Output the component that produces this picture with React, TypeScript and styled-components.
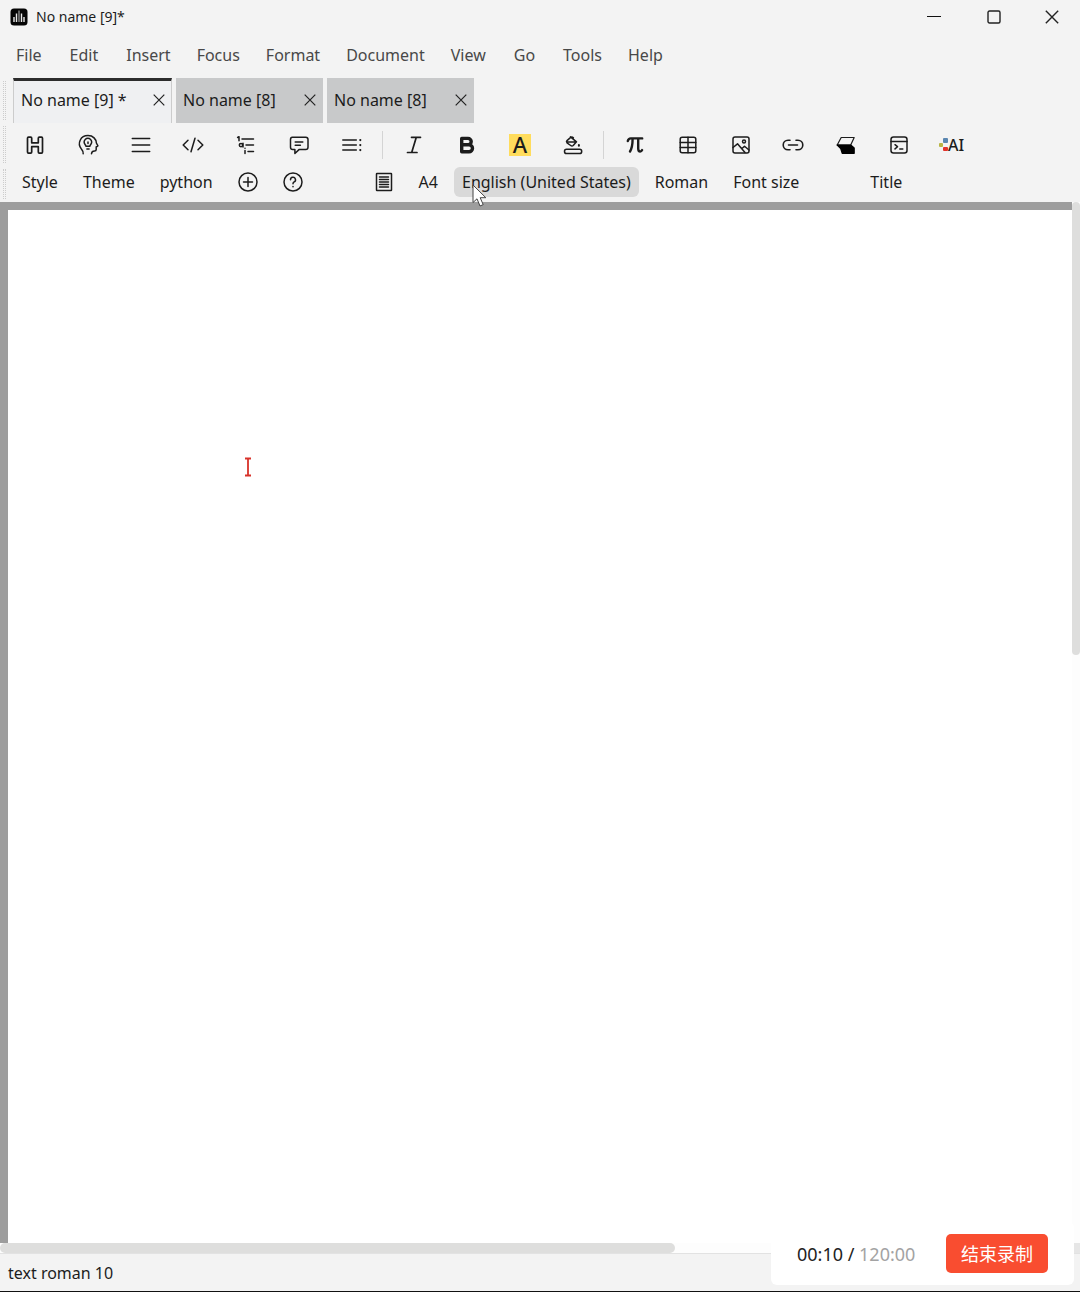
import React from "react";
import styled, { createGlobalStyle, css } from "styled-components";

const GlobalStyle = createGlobalStyle`
  * { box-sizing: border-box; }
  body {
    margin: 0;
    background: #f3f3f3;
    color: #1c1c1c;
    font-family: "Noto Sans", "Noto Sans CJK SC", sans-serif;
    font-size: 16px;
    line-height: 24px;
  }
  button { font: inherit; color: inherit; background: none; border: 0; padding: 0; cursor: default; }
  svg { flex-shrink: 0; }
`;

const Window = styled.div`
  position: relative;
  display: flex;
  flex-direction: column;
  min-height: 100vh;
  border-bottom: 1px solid #111;
`;

const TitleBar = styled.header`
  display: flex;
  align-items: center;
  height: 34px;
  padding-left: 10px;
`;

const WindowTitle = styled.h1`
  flex: 1;
  margin: 0 0 0 8px;
  font-size: 14px;
  font-weight: 400;
`;

const WindowButton = styled.button`
  display: flex;
  align-items: center;
  justify-content: center;
  width: 60px;
  height: 34px;
  &:last-child { width: 56px; }
`;

const MenuBar = styled.nav`
  display: flex;
  height: 44px;
  padding: 0 0 2px 3px;
`;

const MenuItem = styled.button<{ $wide?: boolean }>`
  padding: 0 ${(p) => (p.$wide ? 15 : 13)}px;
  color: #484848;
`;

const Grip = styled.span`
  align-self: stretch;
  width: 3px;
  margin: 3px;
  border: 0 dotted #cccccc;
  border-width: 0 1px;
`;

const TabRow = styled.div`
  display: flex;
  height: 45px;
`;

const TabList = styled.div`
  display: flex;
  gap: 4px;
  padding-left: 4px;
`;

const Tab = styled.div<{ $active?: boolean }>`
  display: flex;
  align-items: center;
  justify-content: space-between;
  min-width: 147px;
  padding: 0 7px 2px;
  background: #c8c9ca;
  ${(p) =>
    p.$active &&
    css`
      min-width: 159px;
      padding: 0 6px 5px 7px;
      background: #eff0f2;
      border: 1px solid #cccccc;
      border-top: 3px solid #2c2c2c;
      border-bottom: 0;
    `}
`;

const CloseTab = styled.button`
  display: flex;
  margin-left: 20px;
`;

const Toolbar = styled.div<{ $height: number }>`
  display: flex;
  align-items: center;
  height: ${(p) => p.$height}px;
`;

const IconGroup = styled.div<{ $count: number; $width: number }>`
  display: grid;
  grid-template-columns: repeat(${(p) => p.$count}, 1fr);
  width: ${(p) => p.$width}px;
`;

const IconButton = styled.button`
  display: flex;
  align-items: center;
  justify-content: center;
  height: 30px;
`;

const Separator = styled.span`
  width: 1px;
  height: 28px;
  margin: 0 5px 0 4px;
  background: #d4d4d4;
`;

const Highlight = styled.span`
  width: 22px;
  height: 22px;
  background: #ffdc5c;
  font-size: 22px;
  line-height: 21px;
  font-weight: 500;
  text-align: center;
`;

const AiLabel = styled.span`
  font-size: 16px;
  font-weight: 500;
`;

const OptionRow = styled.div`
  display: flex;
  gap: 7px;
  padding: 0 0 4px 4px;
`;

const OptionButton = styled.button<{ $hover?: boolean }>`
  position: relative;
  display: flex;
  align-items: center;
  justify-content: center;
  height: 30px;
  padding: 0 ${(p) => (p.$hover ? 8 : 9)}px;
  border-radius: 6px;
  background: ${(p) => (p.$hover ? "#d9d9d9" : "transparent")};
`;

const OptionIcon = styled.button`
  display: flex;
  align-items: center;
  justify-content: center;
  width: 38px;
  height: 30px;
`;

const OptionGap = styled.span`
  width: 39px;
`;

const Pointer = styled.svg`
  position: absolute;
  left: 18px;
  top: 17px;
  z-index: 2;
`;

const Editor = styled.main`
  flex: 1;
  display: grid;
  grid-template-columns: 1fr 8px;
  grid-template-rows: 1fr 10px;
  background: #ffffff;
`;

const Page = styled.section`
  position: relative;
  border: 0 solid #9d9d9d;
  border-width: 8px 0 0 8px;
  background: #ffffff;
`;

const Caret = styled.svg`
  position: absolute;
  left: 236px;
  top: 247px;
`;

const ScrollTrack = styled.div`
  background: #fdfdfd;
`;

const ScrollThumb = styled.div<{ $vertical?: boolean }>`
  width: ${(p) => (p.$vertical ? "100%" : "63%")};
  height: ${(p) => (p.$vertical ? "calc(100% * 10 / 23)" : "100%")};
  border-radius: 5px;
  background: #dededd;
`;

const ScrollCorner = styled.div`
  background: #e6e6e6;
`;

const StatusBar = styled.footer`
  height: 38px;
  padding: 7px 8px 0;
  border-top: 1px solid #e2e2e2;
`;

const Recorder = styled.aside`
  position: absolute;
  right: 6px;
  bottom: 6px;
  z-index: 3;
  display: flex;
  align-items: center;
  justify-content: space-between;
  width: 303px;
  height: 63px;
  padding: 0 26px;
  border-radius: 6px;
  background: #ffffff;
  font-size: 18px;
`;

const Elapsed = styled.span`
  color: #222222;
`;

const Limit = styled.span`
  color: #a3a3a3;
`;

const StopButton = styled.button`
  width: 102px;
  height: 39px;
  padding-bottom: 2px;
  border-radius: 5px;
  background: #f94d30;
  color: #ffffff;
  font-family: "Noto Sans CJK SC", sans-serif;
`;

const Glyph = ({ children, width = 1.5 }: { children: React.ReactNode; width?: number }) => (
  <svg
    width="24"
    height="24"
    viewBox="0 0 24 24"
    fill="none"
    stroke="#1c1c1c"
    strokeWidth={width}
    strokeLinecap="round"
    strokeLinejoin="round"
    aria-hidden="true"
  >
    {children}
  </svg>
);

const Cross = ({ size = 12 }: { size?: number }) => (
  <svg width={size} height={size} viewBox="0 0 12 12" stroke="#222" strokeWidth="1.2" aria-hidden="true">
    <path d="M.7.7l10.6 10.6M11.3.7L.7 11.3" />
  </svg>
);

type Tool = { label: string; icon: React.ReactNode };

const structureTools: Tool[] = [
  {
    label: "Heading",
    icon: (
      <Glyph width={1.7}>
        <path d="M5.5 4.2h2.2q1 0 1 1v4.600h6.600V5.200q0-1 1-1h2.200q1 0 1 1v13.900q0 1-1 1h-2.200q-1 0-1-1v-5.400H8.700v5.400q0 1-1 1H5.500q-1 0-1-1V5.200q0-1 1-1z" />
      </Glyph>
    ),
  },
  {
    label: "Idea",
    icon: (
      <Glyph>
        <path d="M7.200 20.800c.2-2.200-.4-3.300-1.800-4.900C.9 10.500 4.400 2.600 12 2.600c5.200 0 8.200 3.500 8.400 7.400l1.500 2.900-1.700 1.100v2.500c0 1-.6 1.500-1.600 1.500-2 0-2.900.7-3.100 2.800" />
        <path d="M9.900 13.200c0-1.100-1.800-2-1.800-4.100a3.800 3.800 0 0 1 7.600 0c0 2.100-1.800 3-1.800 4.100zM10.900 16h2.200M12 10.500V9" />
      </Glyph>
    ),
  },
  { label: "Paragraph", icon: <Glyph><path d="M3.300 5.500h17.400M3.300 12h17.400M3.300 18.500h17.400" /></Glyph> },
  {
    label: "Code",
    icon: <Glyph><path d="M7 7.200L2.200 12 7 16.800M17 7.200l4.800 4.800-4.800 4.800M14 5.200L10 18.800" /></Glyph>,
  },
  {
    label: "Outline",
    icon: (
      <Glyph>
        <path d="M3.600 4.500l1.400-.8v4M8 6h11.500M12 12h7.500M14 18.500h5.500" />
        <circle cx="7" cy="12.100" r="1.700" />
        <path d="M9 10.200v3.900M11 17.500v3M11 15.200v.1" />
      </Glyph>
    ),
  },
  {
    label: "Comment",
    icon: (
      <Glyph>
        <path d="M5.300 4.200h13.400q2.300 0 2.300 2.300v7.800q0 2.300-2.300 2.300H12L7.900 20.500v-3.900H5.800q-2.300 0-2.300-2.300V6.500q0-2.300 1.800-2.300zM8.200 9h7.600M8.200 12.200h5.200" />
      </Glyph>
    ),
  },
  {
    label: "List",
    icon: (
      <Glyph>
        <path d="M2.800 7h13.500M2.800 12h13.500M2.800 17h13.500" />
        <path strokeWidth="2.200" d="M20.300 7v.1M20.300 12v.1M20.300 17v.1" />
      </Glyph>
    ),
  },
];

const textTools: Tool[] = [
  { label: "Italic", icon: <Glyph width={1.7}><path d="M9.500 4.300H18.500M5.500 19.500h9.500M14.300 4.300L9.700 19.500" /></Glyph> },
  {
    label: "Bold",
    icon: <Glyph width={3.4}><path d="M6.700 5.400h6.300a3.200 3.200 0 0 1 0 6.400H6.700zM6.700 11.800h7.300a3.500 3.500 0 0 1 0 7H6.700z" /></Glyph>,
  },
  { label: "Highlight", icon: <Highlight>A</Highlight> },
  {
    label: "Fill colour",
    icon: (
      <Glyph>
        <rect x="3.500" y="16.300" width="17.200" height="4.300" rx="2.100" />
        <path d="M9.500 3.800l6 5-3.300 3.700q-1.200 1.100-2.500 0L6 9.800q-1-1.100 0-2.200l3.400-3q1.500-1.200 3 .1M6 9h9.200" />
        <path strokeWidth="2" d="M17.900 12v.8" />
      </Glyph>
    ),
  },
];

const insertTools: Tool[] = [
  {
    label: "Formula",
    icon: (
      <Glyph width={2.4}>
        <path d="M4.800 8q.6-2.600 3-2.600h11.400M9.600 5.800c0 5-.6 9.500-2.600 12.700M15.200 5.800v9.700q0 3 2 3 1.300 0 1.900-1.400" />
      </Glyph>
    ),
  },
  {
    label: "Table",
    icon: (
      <Glyph>
        <rect x="4.200" y="4.200" width="15.600" height="15.600" rx="2" />
        <path d="M4.200 9.400h15.600M4.200 14.600h15.600M12 4.200v15.600" />
      </Glyph>
    ),
  },
  {
    label: "Image",
    icon: (
      <Glyph>
        <rect x="4" y="4" width="16" height="16" rx="2" />
        <circle cx="15" cy="8.500" r="1.500" />
        <path d="M4 14.500l4.500-3.700 7.500 8.700M13 15.500l2.500-2.300 4.500 3.800" />
      </Glyph>
    ),
  },
  {
    label: "Link",
    icon: <Glyph width={1.6}><path d="M9 7.200H7a4.800 4.800 0 0 0 0 9.600h2M15 7.200h2a4.800 4.800 0 0 1 0 9.600h-2M7.500 12h9" /></Glyph>,
  },
  {
    label: "Fold",
    icon: (
      <Glyph width={1.2}>
        <path d="M7.200 4.500h13L16.700 12H3.200z" />
        <path fill="#000" stroke="#000" d="M3.200 12h13.500l3.500 3v5.300H8.200l-1.500-4.800z" />
      </Glyph>
    ),
  },
  {
    label: "Terminal",
    icon: (
      <Glyph>
        <rect x="4" y="4" width="16" height="16" rx="2.500" />
        <path d="M4 8.500h16M8 11.700l2.500 2-2.500 2.200M12.800 16h3" />
      </Glyph>
    ),
  },
  {
    label: "AI assistant",
    icon: (
      <>
        <svg width="9" height="14" viewBox="0 0 9 14" aria-hidden="true">
          <rect x="4" width="5" height="5" rx="1" fill="#5a86b0" />
          <rect y="5" width="4" height="4" rx="1" fill="#b9b545" />
          <rect x="4" y="9" width="5" height="4" rx="1" fill="#e3322b" />
        </svg>
        <AiLabel>AI</AiLabel>
      </>
    ),
  },
];

const Tools = ({ items, width }: { items: Tool[]; width: number }) => (
  <IconGroup $count={items.length} $width={width}>
    {items.map((t) => (
      <IconButton key={t.label} type="button" aria-label={t.label}>
        {t.icon}
      </IconButton>
    ))}
  </IconGroup>
);

const menus = ["File", "Edit", "Insert", "Focus", "Format", "Document", "View", "Go", "Tools", "Help"];
const tabs = ["No name [9] *", "No name [8]", "No name [8]"];

export default function App() {
  return (
    <>
      <GlobalStyle />
      <Window>
        <TitleBar>
          <svg width="18" height="18" viewBox="0 0 18 18" aria-hidden="true">
            <rect x=".5" y=".5" width="17" height="17" rx="3.500" fill="#050505" />
            <path d="M4 14V9M6.500 14V5.500M11.500 14V5.500M14 14V9" stroke="#e9e9e9" strokeWidth="1.400" />
            <path d="M9 14V2.500" stroke="#8d8d8d" strokeWidth="1.400" />
          </svg>
          <WindowTitle>No name [9]*</WindowTitle>
          <WindowButton type="button" aria-label="Minimize">
            <svg width="14" height="14" viewBox="0 0 14 14" aria-hidden="true">
              <path d="M0 6.500h14" stroke="#111" />
            </svg>
          </WindowButton>
          <WindowButton type="button" aria-label="Maximize">
            <svg width="14" height="14" viewBox="0 0 14 14" aria-hidden="true">
              <rect x="1" y="1" width="12" height="12" rx="1.500" fill="none" stroke="#222" strokeWidth="1.400" />
            </svg>
          </WindowButton>
          <WindowButton type="button" aria-label="Close">
            <Cross size={14} />
          </WindowButton>
        </TitleBar>

        <MenuBar aria-label="Main menu">
          {menus.map((m) => (
            <MenuItem key={m} type="button" $wide={m === "Edit" || m === "Go"}>
              {m}
            </MenuItem>
          ))}
        </MenuBar>

        <TabRow>
          <Grip />
          <TabList role="tablist">
            {tabs.map((t, i) => (
              <Tab key={i} role="tab" aria-selected={i === 0} $active={i === 0}>
                {t}
                <CloseTab type="button" aria-label="Close tab">
                  <Cross />
                </CloseTab>
              </Tab>
            ))}
          </TabList>
        </TabRow>

        <Toolbar $height={43}>
          <Grip />
          <Tools items={structureTools} width={369} />
          <Separator />
          <Tools items={textTools} width={211} />
          <Separator />
          <Tools items={insertTools} width={369} />
        </Toolbar>

        <Toolbar $height={36}>
          <Grip />
          <OptionRow>
            <OptionButton type="button">Style</OptionButton>
            <OptionButton type="button">Theme</OptionButton>
            <OptionButton type="button">python</OptionButton>
            <OptionIcon type="button" aria-label="Add">
              <Glyph>
                <circle cx="12" cy="12" r="9" />
                <path d="M12 7.500v9M7.500 12h9" />
              </Glyph>
            </OptionIcon>
            <OptionIcon type="button" aria-label="Help">
              <Glyph>
                <circle cx="12" cy="12" r="9" />
                <path d="M9.500 9.700a2.500 2.500 0 1 1 3.700 2.200q-1.200.7-1.200 1.900M12 16.500v.2" />
              </Glyph>
            </OptionIcon>
            <OptionGap />
            <OptionIcon type="button" aria-label="Page layout">
              <Glyph>
                <rect x="4.500" y="3.500" width="15" height="17" rx=".5" />
                <path d="M7.500 7h9M7.500 9.500h9M7.500 12h9M7.500 14.500h9M7.500 17h9" />
              </Glyph>
            </OptionIcon>
            <OptionButton type="button">A4</OptionButton>
            <OptionButton type="button" $hover>
              English (United States)
              <Pointer width="16" height="24" viewBox="0 0 16 24" aria-hidden="true">
                <path
                  d="M1 1v17.500l4-3.700 3 7.200 3.200-1.400-3-6.900h5.600z"
                  fill="#fff"
                  stroke="#444"
                  strokeLinejoin="round"
                />
              </Pointer>
            </OptionButton>
            <OptionButton type="button">Roman</OptionButton>
            <OptionButton type="button">Font size</OptionButton>
            <OptionGap />
            <OptionButton type="button">Title</OptionButton>
          </OptionRow>
        </Toolbar>

        <Editor>
          <Page aria-label="Document">
            <Caret width="8" height="20" viewBox="0 0 8 20" aria-hidden="true">
              <path d="M1 1.500h6M4 1.500v17M1 18.500h6" fill="none" stroke="#d8322a" strokeWidth="1.800" />
            </Caret>
          </Page>
          <ScrollTrack>
            <ScrollThumb $vertical />
          </ScrollTrack>
          <ScrollTrack>
            <ScrollThumb />
          </ScrollTrack>
          <ScrollCorner />
        </Editor>

        <StatusBar>text roman 10</StatusBar>

        <Recorder aria-label="Screen recorder">
          <span>
            <Elapsed>00:10 / </Elapsed>
            <Limit>120:00</Limit>
          </span>
          <StopButton type="button">结束录制</StopButton>
        </Recorder>
      </Window>
    </>
  );
}
